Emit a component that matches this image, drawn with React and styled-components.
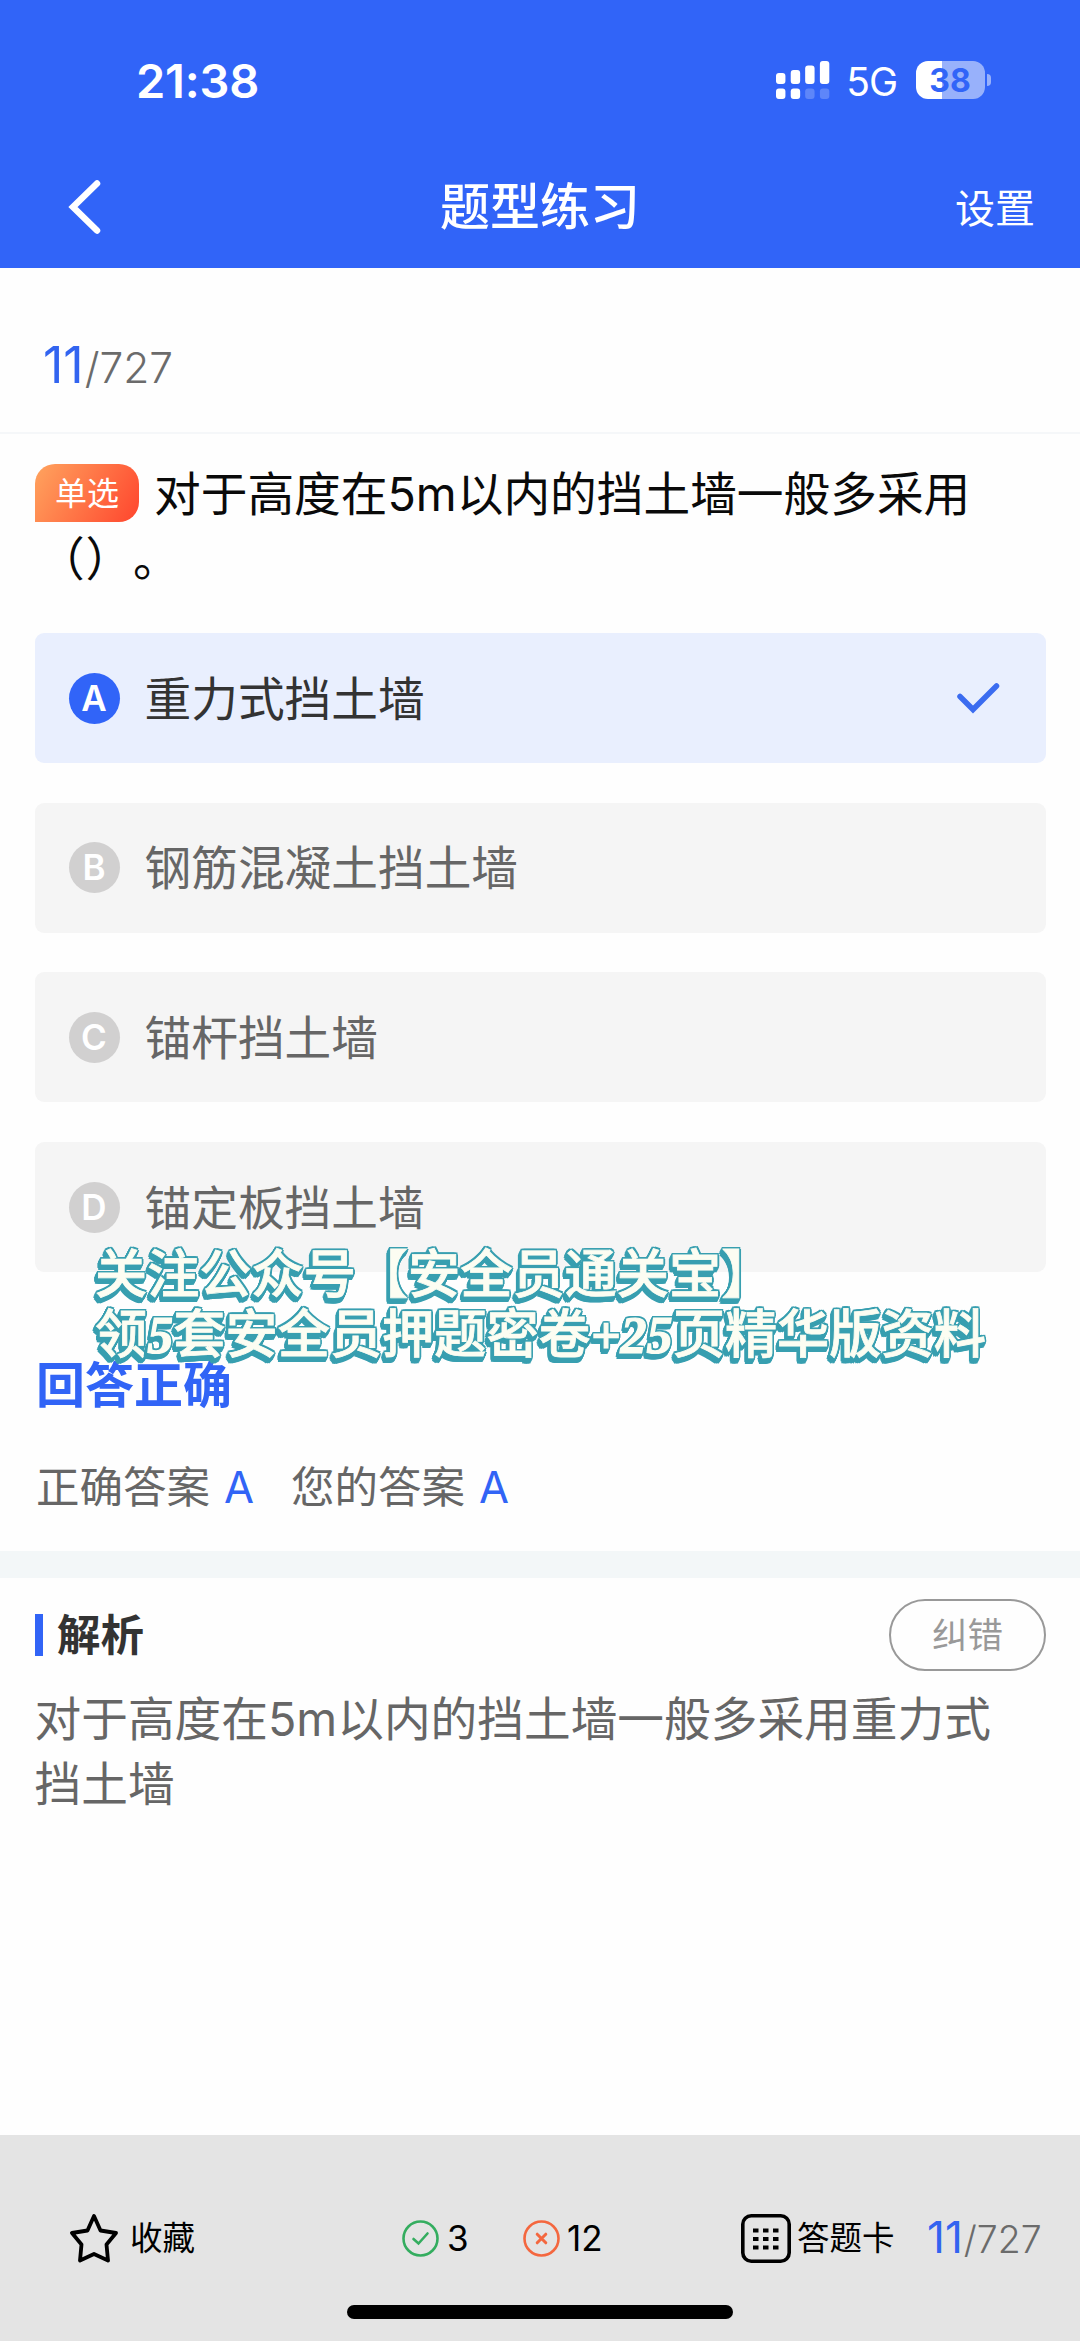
import { createGlobalStyle, styled } from 'styled-components';

const GlobalStyle = createGlobalStyle`
  * {
    box-sizing: border-box;
  }

  body {
    margin: 0;
    background: #fefefe;
    font-family: Inter, 'Noto Sans CJK SC', sans-serif;
    text-spacing-trim: space-all;
  }
`;

const Page = styled.div`
  position: relative;
  display: flex;
  flex-direction: column;
  width: 1080px;
  height: 2341px;
  overflow: hidden;
  background: #fefefe;
`;

const Header = styled.header`
  height: 268px;
  color: #fff;
  background: #3164f8;
`;

const StatusBar = styled.div`
  display: flex;
  align-items: center;
  justify-content: space-between;
  height: 160px;
  padding: 0 89px 0 136px;
`;

const Time = styled.span`
  font-size: 47px;
  font-weight: 600;
  letter-spacing: -0.2px;
`;

const StatusIcons = styled.div`
  display: flex;
  align-items: center;
`;

const Network = styled.span`
  margin: 4px 19px 0 16px;
  font-size: 39px;
  line-height: 40px;
  letter-spacing: -1px;
`;

const Battery = styled.div`
  display: flex;
  align-items: center;
  gap: 2px;
`;

const BatteryBody = styled.div`
  display: flex;
  align-items: center;
  justify-content: center;
  width: 69px;
  height: 38px;
  padding-right: 1px;
  border-radius: 12px;
  color: #3164f8;
  font-size: 32px;
  font-weight: 700;
  background: linear-gradient(to right, #fff ${({ $level }) => $level}%, #98b1fb ${({ $level }) => $level}%);
`;

const BatteryTip = styled.div`
  width: 4px;
  height: 12px;
  border-radius: 0 6px 6px 0;
  background: #98b1fb;
`;

const NavBar = styled.div`
  display: grid;
  grid-template-columns: 1fr auto 1fr;
  align-items: center;
  height: 94px;
  padding: 0 45px 0 68px;
`;

const Title = styled.h1`
  margin: 0 0 0 -23px;
  font-size: 50px;
  font-weight: 500;
  line-height: 60px;
`;

const Settings = styled.span`
  justify-self: end;
  padding-top: 3px;
  font-size: 40px;
  line-height: 50px;
`;

const Counter = styled.div`
  display: flex;
  align-items: baseline;
  color: #6b6b6b;
  font-size: ${({ $size }) => $size * 0.85}px;
  font-weight: 300;
  line-height: 60px;

  b {
    margin-right: 1px;
    color: #3264f0;
    font-size: ${({ $size }) => $size}px;
    font-weight: 400;
  }
`;

const CounterRow = styled.div`
  height: 166px;
  padding: 67px 0 0 43px;
  border-bottom: 2px solid #f5f7f9;
`;

const Question = styled.div`
  height: 199px;
  padding: 28px 35px 0;
  color: #0a0a0a;
  font-size: 46.7px;
  line-height: 65px;
`;

const Blank = styled.span`
  margin-left: 3px;
  letter-spacing: 0.8px;
`;

const Badge = styled.span`
  display: inline-block;
  width: 104px;
  height: 58px;
  margin: -7px 15px 0 0;
  border-radius: 20px 20px 20px 0;
  color: #fff;
  font-size: 32px;
  line-height: 59px;
  text-align: center;
  vertical-align: 6px;
  background: linear-gradient(120deg, #ff9f5c 5%, #ff4a30 95%);
`;

const Options = styled.div`
  display: flex;
  flex-direction: column;
  gap: 39.7px;
  padding: 0 34.5px;
`;

const Option = styled.div`
  display: flex;
  align-items: center;
  height: 130px;
  padding: 0 46px 0 34px;
  border-radius: 9px;
  color: ${({ $selected }) => ($selected ? '#333' : '#666')};
  font-size: 46.7px;
  line-height: 65px;
  background: ${({ $selected }) => ($selected ? '#e9effe' : '#f5f5f5')};

  svg {
    margin-left: auto;
  }
`;

const OptionText = styled.span`
  padding-top: 2px;
`;

const Letter = styled.span`
  width: 51px;
  height: 51px;
  margin-right: 25px;
  border-radius: 50%;
  color: #fff;
  font-size: 35px;
  font-weight: 600;
  line-height: 51px;
  text-align: center;
  background: ${({ $selected }) => ($selected ? '#3164f8' : '#d1d0d0')};
`;

const Result = styled.div`
  height: 279px;
  padding: 84px 36px 0;
`;

const Verdict = styled.div`
  color: #3164f6;
  font-size: 49px;
  font-weight: 700;
  line-height: 60px;
`;

const Answers = styled.div`
  display: flex;
  align-items: center;
  margin-top: 41px;
  color: #666;
  font-size: 43.5px;
  line-height: 60px;

  b {
    margin: 0 37px 0 14px;
    color: #3164f6;
    font-weight: 400;
  }
`;

const Band = styled.div`
  height: 27px;
  background: #f3f7f8;
`;

const Analysis = styled.section`
  flex: 1;
  padding: 21px 34.5px 0;
`;

const AnalysisHead = styled.div`
  display: flex;
  align-items: center;
  height: 72px;
  color: #333;
  font-size: 43.5px;
  font-weight: 700;
  line-height: 60px;

  &::before {
    content: '';
    width: 8.5px;
    height: 42px;
    margin-right: 14px;
    background: #3164f6;
  }
`;

const ReportButton = styled.button`
  width: 157px;
  height: 72px;
  margin-left: auto;
  padding: 1px 0 0 1px;
  border: 2px solid #999;
  border-radius: 40px;
  color: #999;
  font-family: inherit;
  font-size: 35.5px;
  line-height: 60px;
  background: transparent;
`;

const AnalysisText = styled.p`
  margin: 16px 40px 0 0;
  color: #666;
  font-size: 46.7px;
  line-height: 65px;
`;

const Footer = styled.footer`
  height: 206px;
  background: #e4e4e4;
`;

const Tools = styled.div`
  display: flex;
  align-items: center;
  height: 170px;
  padding: 36px 0 0 70px;
  color: #000;
  font-size: 32.5px;
  line-height: 40px;
`;

const Tool = styled.div`
  display: flex;
  align-items: center;
  gap: ${({ $gap }) => $gap}px;
  width: ${({ $width }) => $width}px;
`;

const ToolText = styled.span`
  padding-top: 2px;
`;

const Score = styled.span`
  font-size: 35px;
`;

const HomeIndicator = styled.div`
  width: 386px;
  height: 14px;
  margin: 0 auto;
  border-radius: 7px;
  background: #000;
`;

// a thin ring, repeated along the direction of the drop so the edge reads as solid
const extrude = (color) => {
  const ring = [[2.2, 0], [-2.2, 0], [0, 2.2], [0, -2.2], [1.6, 1.6], [-1.6, 1.6], [1.6, -1.6], [-1.6, -1.6]];
  const drop = [0, 1, 2, 3, 4];
  return drop.flatMap((d) => ring.map(([x, y]) => `${(x - d * 0.5).toFixed(1)}px ${y + d}px ${color}`)).join(', ');
};

// promo text lying across the last option and the verdict
const Promo = styled.div`
  position: absolute;
  top: 1244px;
  left: 95px;
  color: #fcfdf2;
  font-size: 52.2px;
  font-weight: 500;
  line-height: 60px;
  white-space: nowrap;
  -webkit-text-stroke: 0.8px #fcfdf2;
  text-shadow: ${extrude('#389fb0')};

  em {
    font-family: 'Liberation Serif', serif;
    font-weight: 700;
    -webkit-text-stroke-width: 1.2px;
  }
`;

const SignalIcon = () => (
  <svg width="54" height="38" viewBox="0 0 55 38" fill="#fff" preserveAspectRatio="none">
    <rect x="0" y="12" width="9.6" height="11" rx="3" />
    <rect x="15" y="9" width="9.6" height="14" rx="3" />
    <rect x="29.7" y="4.6" width="9.6" height="18.4" rx="3" />
    <rect x="44.7" y="0" width="9.6" height="23" rx="3" />
    <rect x="0" y="27.5" width="9.6" height="10.5" rx="3" />
    <rect x="15" y="27.5" width="9.6" height="10.5" rx="3" />
    <rect x="29.7" y="27.5" width="9.6" height="10.5" rx="3" opacity=".22" />
    <rect x="44.7" y="27.5" width="9.6" height="10.5" rx="3" opacity=".22" />
  </svg>
);

const BackIcon = () => (
  <svg width="34" height="56" viewBox="0 0 34 56" fill="none" stroke="#fff" strokeWidth="6.5" strokeLinecap="round">
    <path d="M29 4.5 L5 28 L29 51.5" />
  </svg>
);

const CheckIcon = () => (
  <svg width="44" height="32" viewBox="0 0 44 32" fill="none" stroke="#3b6cf0" strokeWidth="5.5" strokeLinecap="round">
    <path d="M4 14.5 L17 27.5 L40.5 4" />
  </svg>
);

const StarIcon = () => (
  <svg width="48" height="50" viewBox="0 0 48 50" fill="none" stroke="#000" strokeWidth="3.8" strokeLinejoin="round">
    <path d="M24 3 L30.5 17.5 L46 20 L36.5 31.5 L38 47.5 L24 41 L10 47.5 L11.5 31.5 L2 20 L17.5 17.5 Z" />
  </svg>
);

const RightIcon = () => (
  <svg width="37" height="37" viewBox="0 0 37 37" fill="none" stroke="#34ad5f" strokeWidth="2.6" strokeLinecap="round">
    <circle cx="18.5" cy="18.5" r="17" />
    <path d="M11.5 19 L16.5 23.5 L25.5 13.5" />
  </svg>
);

const WrongIcon = () => (
  <svg width="37" height="37" viewBox="0 0 37 37" fill="none" stroke="#f4673f" strokeLinecap="round">
    <circle cx="18.5" cy="18.5" r="17" strokeWidth="2.6" />
    <path d="M14.2 14.2 L22.8 22.8 M22.8 14.2 L14.2 22.8" strokeWidth="3" />
  </svg>
);

const CardIcon = () => (
  <svg width="50" height="49" viewBox="0 0 50 49">
    <rect x="1.8" y="1.8" width="46.4" height="45.4" rx="8.5" fill="none" stroke="#000" strokeWidth="3.6" />
    {[14.5, 23, 31.5].map((y) => [12, 22, 32].map((x) => <rect key={`${x}-${y}`} x={x} y={y} width="5.5" height="4" />))}
  </svg>
);

const OPTIONS = [
  { letter: 'A', text: '重力式挡土墙', selected: true },
  { letter: 'B', text: '钢筋混凝土挡土墙' },
  { letter: 'C', text: '锚杆挡土墙' },
  { letter: 'D', text: '锚定板挡土墙' },
];

export default function App() {
  return (
    <Page lang="zh-CN">
      <GlobalStyle />
      <Header>
        <StatusBar>
          <Time>21:38</Time>
          <StatusIcons>
            <SignalIcon />
            <Network>5G</Network>
            <Battery>
              <BatteryBody $level={38}>38</BatteryBody>
              <BatteryTip />
            </Battery>
          </StatusIcons>
        </StatusBar>
        <NavBar>
          <BackIcon />
          <Title>题型练习</Title>
          <Settings>设置</Settings>
        </NavBar>
      </Header>

      <CounterRow>
        <Counter $size={50}>
          <b>11</b>/727
        </Counter>
      </CounterRow>

      <Question>
        <Badge>单选</Badge>
        对于高度在5m以内的挡土墙一般多采用<Blank>（）。</Blank>
      </Question>

      <Options>
        {OPTIONS.map(({ letter, text, selected }) => (
          <Option key={letter} $selected={selected}>
            <Letter $selected={selected}>{letter}</Letter>
            <OptionText>{text}</OptionText>
            {selected && <CheckIcon />}
          </Option>
        ))}
      </Options>

      <Result>
        <Verdict>回答正确</Verdict>
        <Answers>
          正确答案<b>A</b>您的答案<b>A</b>
        </Answers>
      </Result>

      <Band />

      <Analysis>
        <AnalysisHead>
          解析
          <ReportButton>纠错</ReportButton>
        </AnalysisHead>
        <AnalysisText>对于高度在5m以内的挡土墙一般多采用重力式挡土墙</AnalysisText>
      </Analysis>

      <Footer>
        <Tools>
          <Tool $gap={12} $width={332}>
            <StarIcon />
            <ToolText>收藏</ToolText>
          </Tool>
          <Tool $gap={8} $width={121}>
            <RightIcon />
            <Score>3</Score>
          </Tool>
          <Tool $gap={7} $width={218}>
            <WrongIcon />
            <Score>12</Score>
          </Tool>
          <Tool $gap={6} $width={186}>
            <CardIcon />
            <ToolText>答题卡</ToolText>
          </Tool>
          <Counter $size={44}>
            <b>11</b>/727
          </Counter>
        </Tools>
        <HomeIndicator />
      </Footer>

      <Promo>
        关注公众号【安全员通关宝】
        <br />领<em>5</em>套安全员押题密卷<em>+25</em>页精华版资料
      </Promo>
    </Page>
  );
}
